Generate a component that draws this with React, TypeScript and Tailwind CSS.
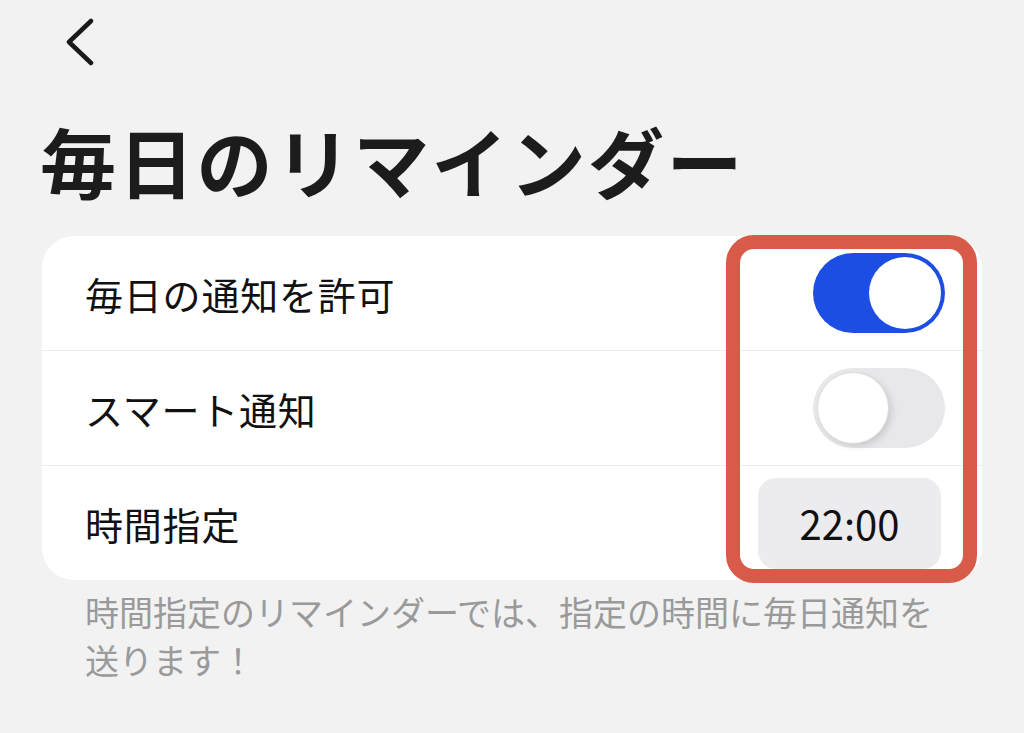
import React from 'react'

const font = { fontFamily: '"Noto Sans CJK JP", "Noto Sans", sans-serif' }

function Toggle({ on }: { on: boolean }) {
  return on ? (
    <div className="w-[132px] h-[80px] rounded-full bg-[#1d4ee3] flex items-center justify-end pr-[4px]">
      <div className="w-[72px] h-[72px] rounded-full bg-white" />
    </div>
  ) : (
    <div className="w-[132px] h-[80px] rounded-full bg-[#e8e8ea] flex items-center pl-[4px]">
      <div className="w-[72px] h-[72px] rounded-full bg-white border border-[#dcdcdc] shadow-[3px_3px_6px_rgba(0,0,0,0.12)]" />
    </div>
  )
}

export default function App() {
  return (
    <div className="w-[1024px] h-[733px] bg-[#f2f2f2] overflow-hidden" style={font}>
      <div className="pl-[64px] pt-[18px]">
        <svg width="32" height="48" viewBox="0 0 32 48" fill="none">
          <path d="M27 3 L5 24 L27 45" stroke="#1a1a1a" strokeWidth="4.5" strokeLinecap="round" strokeLinejoin="round" />
        </svg>
      </div>

      <h1 className="mt-[48px] ml-[40px] text-[76px] leading-[92px] font-bold text-[#1c1c1c] tracking-[2.3px]">
        毎日のリマインダー
      </h1>

      <div className="relative mx-[42px] mt-[30px] bg-white rounded-[32px]">
        <div className="h-[115px] flex items-center justify-between pl-[43px] pr-[37px] border-b border-[#ececec]">
          <span className="text-[38px] tracking-[0.8px] text-[#111]">毎日の通知を許可</span>
          <Toggle on />
        </div>
        <div className="h-[115px] flex items-center justify-between pl-[43px] pr-[37px] border-b border-[#ececec]">
          <span className="text-[38px] tracking-[0.8px] text-[#111]">スマート通知</span>
          <Toggle on={false} />
        </div>
        <div className="h-[114px] flex items-center justify-between pl-[43px] pr-[41px]">
          <span className="text-[38px] tracking-[0.8px] text-[#111]">時間指定</span>
          <div className="w-[183px] h-[91px] rounded-[18px] bg-[#ececee] flex items-center justify-center text-[40px] text-[#111]">
            22:00
          </div>
        </div>

        <div className="absolute left-[684px] top-[-1px] w-[251px] h-[348px] border-[14px] border-[#d85a48] rounded-[28px] pointer-events-none" />
      </div>

      <p className="mx-[85px] mt-[8px] text-[34px] leading-[48px] text-[#9a9a9a]">
        時間指定のリマインダーでは、指定の時間に毎日通知を送ります！
      </p>
    </div>
  )
}
